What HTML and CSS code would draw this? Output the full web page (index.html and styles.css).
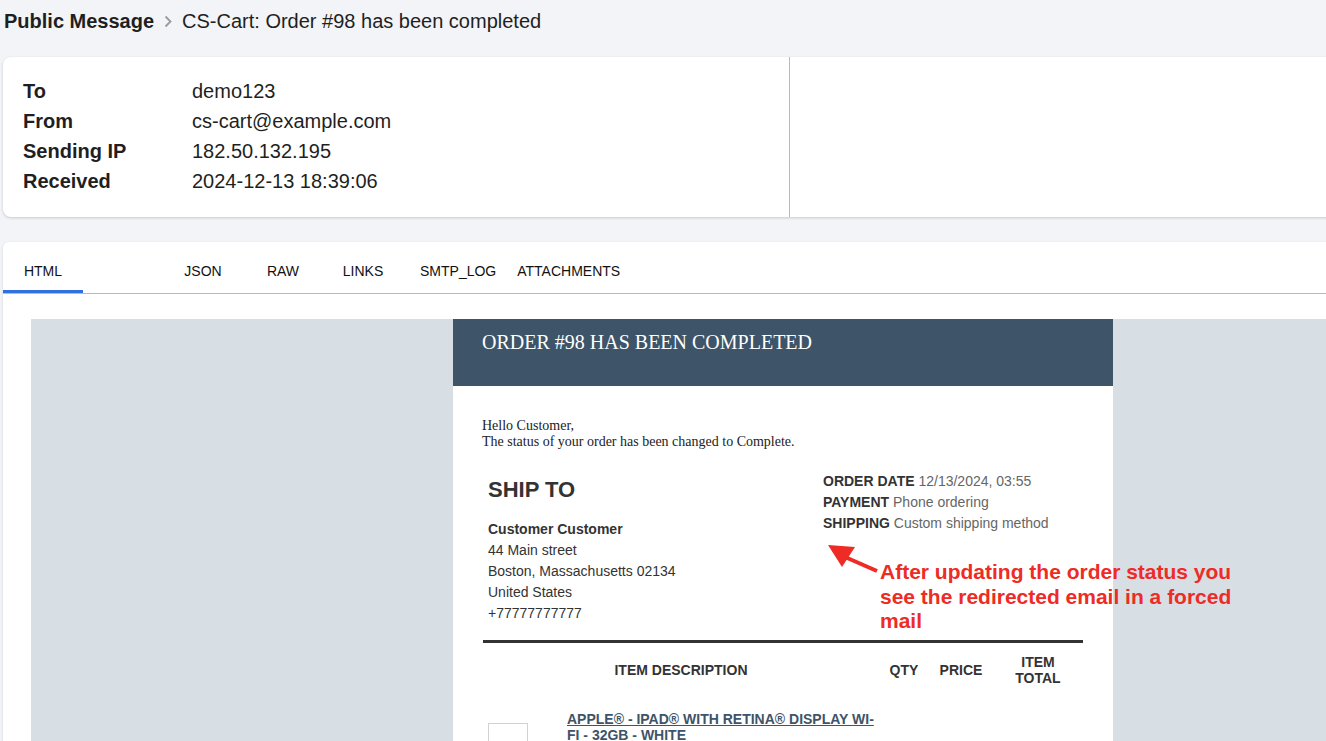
FILE: index.html
```html
<!DOCTYPE html>
<html lang="en">
<head>
    <meta charset="UTF-8">
    <meta name="viewport" content="width=device-width, initial-scale=1.0">
    <title>Public Message</title>
    <link rel="stylesheet" href="styles.css">
</head>
<body>
    <!-- Breadcrumb -->
    <div class="breadcrumb">
        <span class="crumb-root">Public Message</span>
        <svg class="crumb-sep" width="8" height="13" viewBox="0 0 8 13">
            <polyline points="1.5,1.5 6.5,6.5 1.5,11.5" fill="none" stroke="#9a9a9a" stroke-width="1.8"/>
        </svg>
        <span class="crumb-title">CS-Cart: Order #98 has been completed</span>
    </div>

    <!-- Message details -->
    <div class="meta-card">
        <div class="meta-list">
            <div class="meta-row"><span class="meta-label">To</span><span>demo123</span></div>
            <div class="meta-row"><span class="meta-label">From</span><span>cs-cart@example.com</span></div>
            <div class="meta-row"><span class="meta-label">Sending IP</span><span>182.50.132.195</span></div>
            <div class="meta-row"><span class="meta-label">Received</span><span>2024-12-13 18:39:06</span></div>
        </div>
        <div class="meta-side"></div>
    </div>

    <!-- Message body -->
    <div class="body-card">
        <div class="tabs">
            <div class="tab active">HTML</div>
            <div class="tab tab-gap">JSON</div>
            <div class="tab">RAW</div>
            <div class="tab">LINKS</div>
            <div class="tab tab-wide">SMTP_LOG</div>
            <div class="tab tab-last">ATTACHMENTS</div>
        </div>

        <div class="preview">
            <div class="frame">
                <div class="mail">
                    <div class="mail-header">ORDER #98 HAS BEEN COMPLETED</div>
                    <div class="mail-body">
                        <p class="greeting">Hello Customer,<br>The status of your order has been changed to Complete.</p>

                        <div class="order-info">
                            <div class="ship-to">
                                <h2>SHIP TO</h2>
                                <p class="addr"><strong>Customer Customer</strong><br>44 Main street<br>Boston, Massachusetts 02134<br>United States<br>+77777777777</p>
                            </div>
                            <div class="order-meta">
                                <p><strong>ORDER DATE</strong> 12/13/2024, 03:55</p>
                                <p><strong>PAYMENT</strong> Phone ordering</p>
                                <p><strong>SHIPPING</strong> Custom shipping method</p>
                            </div>
                        </div>

                        <table class="items">
                            <thead>
                                <tr>
                                    <th colspan="2" class="col-desc">ITEM DESCRIPTION</th>
                                    <th class="col-qty">QTY</th>
                                    <th class="col-price">PRICE</th>
                                    <th class="col-total">ITEM TOTAL</th>
                                </tr>
                            </thead>
                            <tbody>
                                <tr>
                                    <td class="item-img"><div class="img-box"></div></td>
                                    <td class="item-name">
                                        <a href="#">APPLE® - IPAD® WITH RETINA® DISPLAY WI-FI - 32GB - WHITE</a>
                                    </td>
                                    <td></td>
                                    <td></td>
                                    <td></td>
                                </tr>
                            </tbody>
                        </table>
                    </div>

                    <!-- Annotation overlay -->
                    <svg class="note-arrow" width="56" height="30" viewBox="0 0 56 30">
                        <line x1="52" y1="27" x2="20" y2="13" stroke="#ee2b24" stroke-width="4"/>
                        <polygon points="3,1 30,3 17,23" fill="#ee2b24"/>
                    </svg>
                    <div class="note">After updating the order status you<br>see the redirected email in a forced<br>mail</div>
                </div>
            </div>
        </div>
    </div>
</body>
</html>
```

FILE: styles.css
```css
html, body {
    overflow: hidden;
}
body {
    margin: 0;
    background-color: #f3f4f7;
    font-family: "Liberation Sans", Arial, sans-serif;
    color: #1f1f1f;
}
.breadcrumb {
    height: 42px;
    padding-left: 4px;
    display: flex;
    align-items: center;
    font-size: 20px;
}
.crumb-root {
    font-weight: bold;
}
.crumb-sep {
    margin: 1px 10px 0 10px;
}
.meta-card {
    margin: 15px -20px 0 3px;
    height: 160px;
    background: white;
    border-radius: 8px;
    box-shadow: 0 1px 3px rgba(0, 0, 0, 0.18);
    display: flex;
}
.meta-list {
    width: 766px;
    padding: 19px 0 0 20px;
    border-right: 1px solid #b9b9b9;
    font-size: 20px;
}
.meta-row {
    display: flex;
    line-height: 30px;
}
.meta-label {
    width: 169px;
    font-weight: bold;
}
.meta-side {
    flex: 1;
}
.body-card {
    margin: 25px -20px 0 3px;
    height: 520px;
    background: white;
    border-radius: 6px 6px 0 0;
    box-shadow: 0 1px 3px rgba(0, 0, 0, 0.12);
}
.tabs {
    display: flex;
    height: 51px;
    border-bottom: 1px solid #b8bcc0;
}
.tab {
    min-width: 80px;
    display: flex;
    align-items: center;
    justify-content: center;
    font-size: 14px;
    color: #111;
    box-sizing: border-box;
    padding-top: 10px;
    border-bottom: 3px solid transparent;
}
.tab.active {
    border-bottom-color: #2f6fe0;
}
.tab-gap {
    margin-left: 80px;
}
.tab-wide {
    padding-left: 17px;
    padding-right: 17px;
}
.tab-last {
    padding-left: 4px;
    padding-right: 4px;
}
.preview {
    padding: 25px 0 0 28px;
}
.frame {
    width: 1504px;
    height: 500px;
    background-color: #d7dee4;
}
.mail {
    position: relative;
    width: 660px;
    height: 500px;
    margin: 0 auto;
    background: white;
}
.mail-header {
    height: 67px;
    box-sizing: border-box;
    padding: 12px 0 0 29px;
    background-color: #3e5468;
    color: white;
    font-family: "Liberation Serif", "Times New Roman", serif;
    font-size: 20px;
    line-height: 22px;
}
.mail-body {
    padding: 32px 30px 0 30px;
}
.greeting {
    margin: 0 0 0 -1px;
    font-family: "Liberation Serif", "Times New Roman", serif;
    font-size: 14px;
    line-height: 16px;
    color: #222;
}
.order-info {
    display: flex;
    margin-top: 21px;
    padding-bottom: 16px;
    border-bottom: 3px solid #333;
}
.ship-to {
    width: 335px;
    padding: 6px 0 0 5px;
}
.ship-to h2 {
    margin: 0 0 16px 0;
    font-size: 22px;
    line-height: 26px;
    color: #333;
}
.addr {
    margin: 0;
    font-size: 14px;
    line-height: 21px;
    color: #333;
}
.order-meta {
    font-size: 14px;
    line-height: 21px;
    color: #666;
}
.order-meta p {
    margin: 0;
}
.order-meta strong {
    color: #333;
}
.items {
    width: 100%;
    border-collapse: collapse;
    margin-top: 3px;
}
.items th {
    height: 48px;
    font-size: 14px;
    line-height: 16px;
    color: #333;
    text-align: center;
    padding: 0;
}
.col-desc {
    width: 396px;
}
.col-qty {
    width: 50px;
}
.col-price {
    width: 64px;
}
.col-total {
    width: 60px;
    padding: 0 15px !important;
}
.items td {
    vertical-align: top;
    font-size: 14px;
    line-height: 16px;
    color: #333;
}
.item-img {
    width: 75px;
    padding: 29px 0 0 5px;
}
.img-box {
    width: 38px;
    height: 38px;
    border: 1px solid #cfd3d6;
}
.item-name {
    padding: 17px 4px 0 4px;
}
.item-name a {
    color: #3e5468;
    font-weight: bold;
}
.note-arrow {
    position: absolute;
    left: 372px;
    top: 225px;
}
.note {
    position: absolute;
    left: 427px;
    top: 241px;
    white-space: nowrap;
    color: #ee2b24;
    font-weight: bold;
    font-size: 21px;
    line-height: 24.5px;
}
```
